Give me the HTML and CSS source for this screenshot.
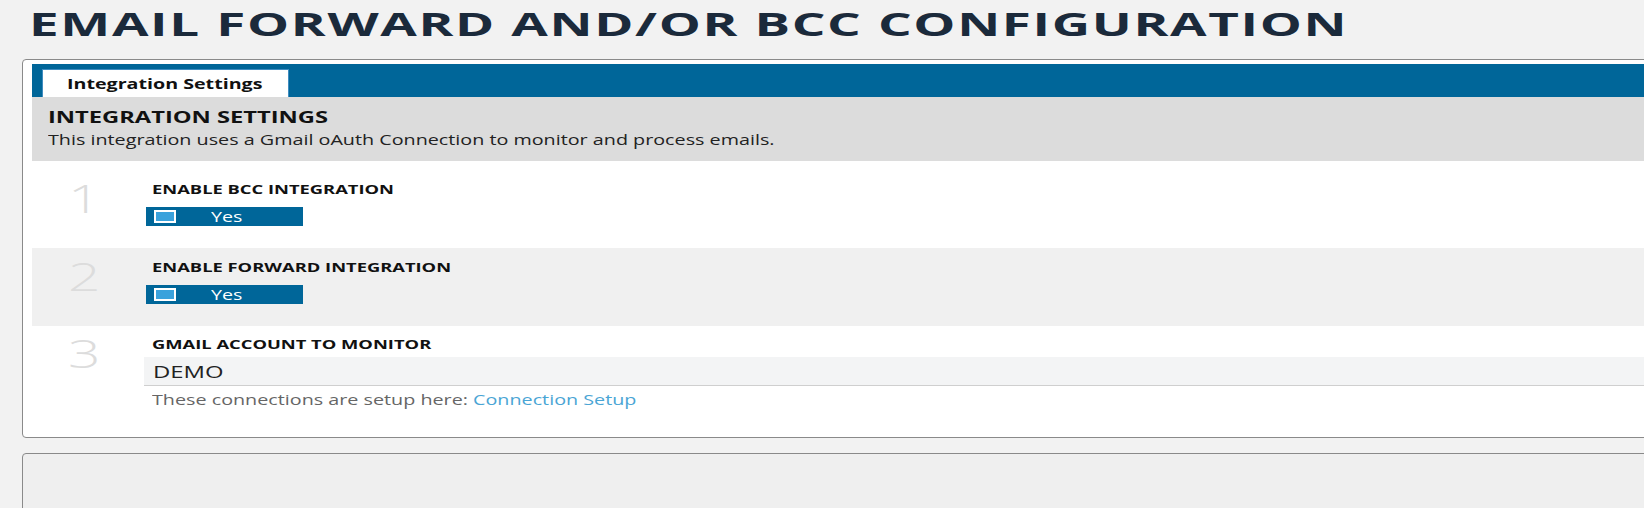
FILE: index.html
```html
<!DOCTYPE html>
<html lang="en">
<head>
<meta charset="utf-8">
<title>Email Forward and/or BCC Configuration</title>
<link rel="stylesheet" href="styles.css">
</head>
<body>
<div class="page">
  <h1 class="title"><span class="sx sx-title">EMAIL FORWARD AND/OR BCC CONFIGURATION</span></h1>

  <div class="panel">
    <div class="tabbar">
      <div class="tab"><span class="sx">Integration Settings</span></div>
    </div>

    <div class="section-head">
      <div class="section-title"><span class="sx sx-head">INTEGRATION SETTINGS</span></div>
      <div class="section-desc"><span class="sx sx-wide">This integration uses a Gmail oAuth Connection to monitor and process emails.</span></div>
    </div>

    <div class="row row-first">
      <div class="num"><span class="sx sx-num">1</span></div>
      <div class="field">
        <div class="label"><span class="sx sx-caps">ENABLE BCC INTEGRATION</span></div>
        <div class="toggle"><span class="check"></span><span class="yes"><span class="sx">Yes</span></span></div>
      </div>
    </div>

    <div class="row row-alt">
      <div class="num"><span class="sx sx-num">2</span></div>
      <div class="field">
        <div class="label"><span class="sx sx-caps">ENABLE FORWARD INTEGRATION</span></div>
        <div class="toggle"><span class="check"></span><span class="yes"><span class="sx">Yes</span></span></div>
      </div>
    </div>

    <div class="row row-last">
      <div class="num"><span class="sx sx-num">3</span></div>
      <div class="field">
        <div class="label"><span class="sx sx-caps">GMAIL ACCOUNT TO MONITOR</span></div>
        <div class="select"><span class="sx sx-demo">DEMO</span></div>
        <div class="help"><span class="sx sx-wide">These connections are setup here: <a class="link" href="#">Connection Setup</a></span></div>
      </div>
    </div>
  </div>

  <div class="panel2"></div>
</div>
</body>
</html>
```

FILE: styles.css
```css
html, body {
  margin: 0;
  padding: 0;
  height: 508px;
  overflow: hidden;
}

body {
  background: #f2f2f2;
  font-family: "Open Sans", "Liberation Sans", sans-serif;
  color: #111;
}

.page {
  padding-left: 22px;
}

.sx {
  display: inline-block;
  white-space: nowrap;
  transform: scaleX(1.31);
  transform-origin: 0 50%;
}

.sx-caps {
  transform: scaleX(1.41);
}

.sx-head {
  transform: scaleX(1.48);
}

.sx-wide {
  transform: scaleX(1.41);
}

.sx-demo {
  transform: scaleX(1.49);
}

.sx-title {
  transform: scaleX(1.655);
  letter-spacing: 1px;
}

.sx-num {
  transform: scaleX(1.5);
}

.title {
  margin: 0;
  padding: 5px 0 0 7px;
  height: 37px;
  font-size: 32px;
  line-height: 38px;
  font-weight: 700;
  color: #1b2a3b;
}

.panel {
  margin-top: 17px;
  margin-right: -20px;
  background: #fff;
  border: 1px solid #8a8a8a;
  border-radius: 4px;
  padding: 4px 0 0 9px;
}

.tabbar {
  background: #006699;
  height: 33px;
  display: flex;
  align-items: flex-end;
  padding-left: 10px;
}

.tab {
  width: 247px;
  height: 28px;
  box-sizing: border-box;
  background: #fff;
  border: 1px solid #3f8cc0;
  border-bottom: none;
  font-size: 15px;
  font-weight: 700;
  line-height: 27px;
  padding-left: 24px;
  color: #111;
}

.section-head {
  background: #dcdcdc;
  padding: 9px 16px 11px 16px;
}

.section-title {
  font-size: 16px;
  font-weight: 700;
  line-height: 22px;
  color: #111;
}

.section-desc {
  margin-top: 2px;
  font-size: 14px;
  line-height: 20px;
  color: #222;
}

.row {
  display: flex;
  padding-top: 10px;
  padding-bottom: 22px;
  background: #fff;
}

.row-first {
  padding-top: 19px;
}

.row-alt {
  background: #f0f0f0;
}

.row-last {
  padding-top: 9px;
  padding-bottom: 27px;
}

.num {
  width: 112px;
  flex: none;
  box-sizing: border-box;
  padding-left: 36px;
  margin-top: -1px;
  font-size: 38px;
  line-height: 38px;
  font-weight: 300;
  color: #dcdcdc;
}

.field {
  flex: 1;
  min-width: 0;
}

.label {
  padding-left: 8px;
  font-size: 13px;
  font-weight: 700;
  line-height: 18px;
  color: #111;
}

.toggle {
  margin: 9px 0 0 2px;
  width: 157px;
  height: 19px;
  background: #006699;
  display: flex;
  align-items: center;
}

.check {
  margin-left: 8px;
  width: 22px;
  height: 13px;
  box-sizing: border-box;
  border: 2px solid #fff;
  background: #3aa2dc;
  flex: none;
}

.yes {
  margin-left: 35px;
  font-size: 15px;
  line-height: 19px;
  color: #fff;
}

.select {
  margin-top: 4px;
  background: #f3f4f5;
  border-bottom: 1px solid #cfcfcf;
  padding-left: 9px;
  padding-top: 2px;
  height: 26px;
  font-size: 16px;
  line-height: 26px;
  color: #222;
}

.help {
  margin-top: 4px;
  padding-left: 8px;
  font-size: 14px;
  line-height: 20px;
  color: #666;
}

.link {
  color: #4aa5d5;
  text-decoration: none;
}

.panel2 {
  margin-top: 15px;
  margin-right: -20px;
  height: 120px;
  background: #efefef;
  border: 1px solid #8a8a8a;
  border-radius: 4px;
}
```
